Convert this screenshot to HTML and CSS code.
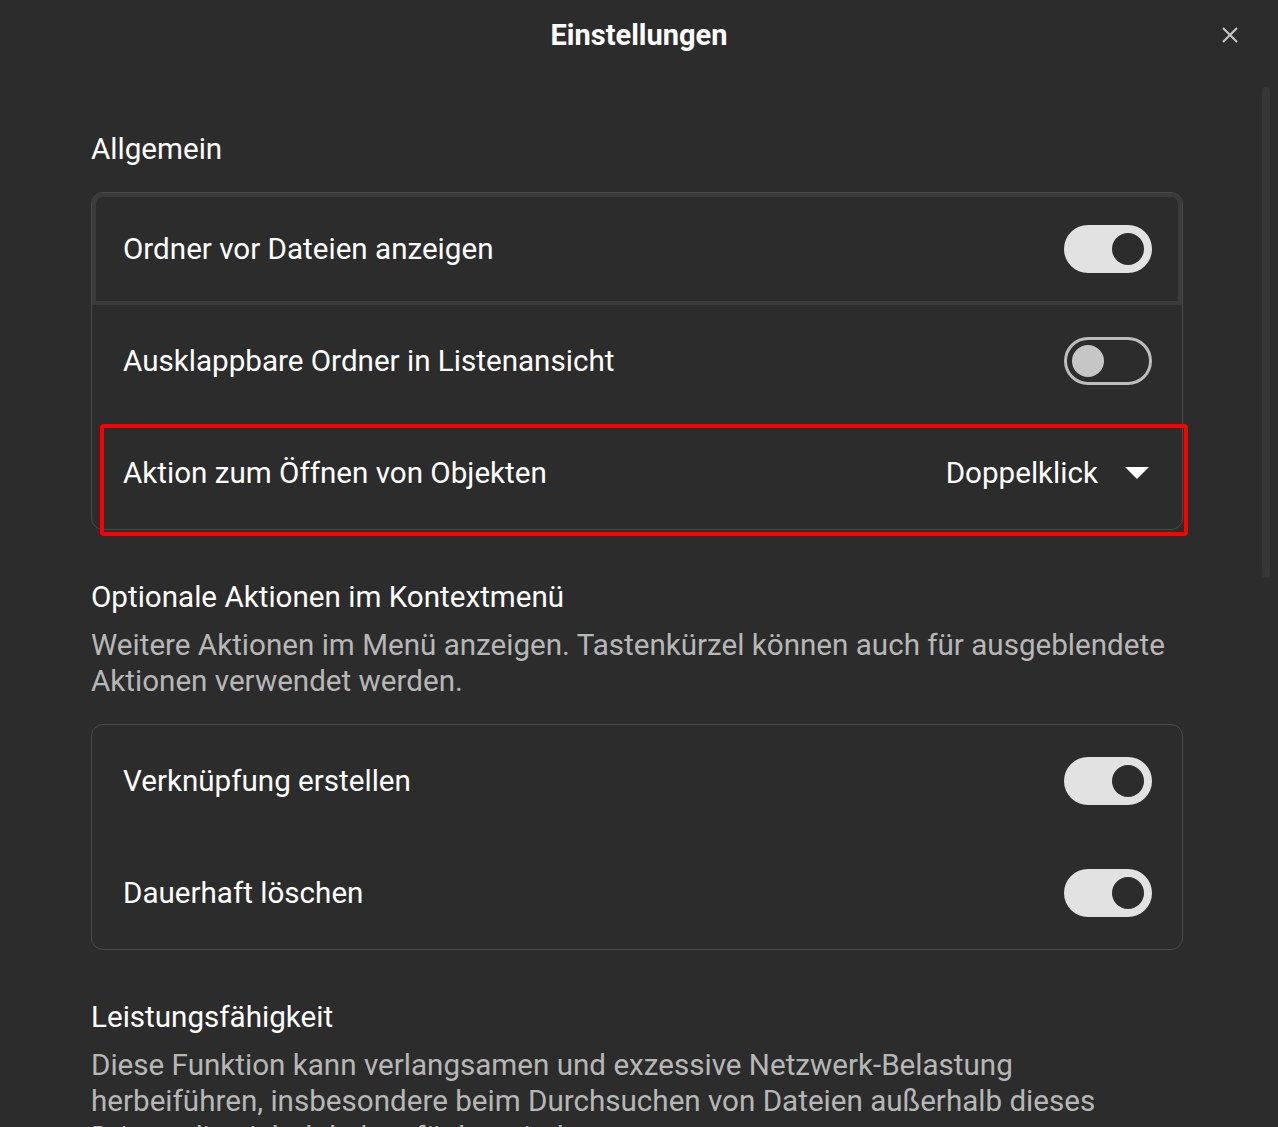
FILE: index.html
```html
<!DOCTYPE html>
<html lang="de">
<head>
    <meta charset="UTF-8">
    <meta name="viewport" content="width=device-width, initial-scale=1.0">
    <title>Einstellungen</title>
    <link rel="stylesheet" href="styles.css">
</head>
<body>
    <div class="dialog">
        <header class="dialog-header">
            <h1>Einstellungen</h1>
            <button class="close-btn" aria-label="Schließen">
                <svg width="18" height="18" viewBox="0 0 18 18">
                    <path d="M2 2 L16 16 M16 2 L2 16" stroke="#c8c8c8" stroke-width="2" fill="none"/>
                </svg>
            </button>
        </header>

        <div class="scrollbar"></div>

        <main class="content">
            <h2 class="section-title">Allgemein</h2>
            <div class="card">
                <div class="row row-focus">
                    <span class="label">Ordner vor Dateien anzeigen</span>
                    <span class="toggle on"><span class="knob"></span></span>
                </div>
                <div class="row">
                    <span class="label">Ausklappbare Ordner in Listenansicht</span>
                    <span class="toggle off"><span class="knob"></span></span>
                </div>
                <div class="row">
                    <span class="label">Aktion zum Öffnen von Objekten</span>
                    <span class="select">
                        Doppelklick
                        <svg width="24" height="12" viewBox="0 0 24 12">
                            <path d="M0 0 H24 L12 12 Z" fill="#ffffff"/>
                        </svg>
                    </span>
                    <span class="marker"></span>
                </div>
            </div>

            <h2 class="section-title spaced">Optionale Aktionen im Kontextmenü</h2>
            <p class="section-desc">Weitere Aktionen im Menü anzeigen. Tastenkürzel können auch für ausgeblendete Aktionen verwendet werden.</p>
            <div class="card">
                <div class="row">
                    <span class="label">Verknüpfung erstellen</span>
                    <span class="toggle on"><span class="knob"></span></span>
                </div>
                <div class="row">
                    <span class="label">Dauerhaft löschen</span>
                    <span class="toggle on"><span class="knob"></span></span>
                </div>
            </div>

            <h2 class="section-title spaced">Leistungsfähigkeit</h2>
            <p class="section-desc">Diese Funktion kann verlangsamen und exzessive Netzwerk-Belastung herbeiführen, insbesondere beim Durchsuchen von Dateien außerhalb dieses Drives, die nicht lokal verfügbar sind.</p>
        </main>
    </div>
</body>
</html>
```

FILE: styles.css
```css
html, body {
    margin: 0;
    height: 100%;
    overflow: hidden;
}

body {
    font-family: Roboto, "Liberation Sans", sans-serif;
    background: #2c2c2c;
    color: #ffffff;
}

.dialog {
    position: relative;
    height: 100%;
}

.dialog-header {
    height: 70px;
    display: flex;
    align-items: center;
    justify-content: center;
    position: relative;
}

.dialog-header h1 {
    margin: 0;
    font-size: 29px;
    font-weight: 700;
    line-height: 36px;
}

.close-btn {
    position: absolute;
    right: 39px;
    top: 26px;
    width: 18px;
    height: 18px;
    padding: 0;
    border: 0;
    background: none;
    cursor: pointer;
}

.close-btn svg {
    display: block;
}

.scrollbar {
    position: absolute;
    right: 8px;
    top: 87px;
    width: 8px;
    height: 491px;
    border-radius: 4px;
    background: #363636;
}

.content {
    padding: 61px 95px 0 91px;
}

.section-title {
    margin: 0;
    font-size: 29.6px;
    font-weight: 400;
    line-height: 36px;
}

.section-title.spaced {
    margin-top: 49px;
}

.section-desc {
    margin: 12px 0 0;
    font-size: 29.6px;
    line-height: 36px;
    color: #b7b7b7;
}

.card {
    margin-top: 25px;
    border: 1px solid #4a4a4a;
    border-radius: 12px;
}

.section-desc + .card {
    margin-top: 25px;
}

.row {
    position: relative;
    height: 112px;
    display: flex;
    align-items: center;
    justify-content: space-between;
    padding: 0 30px 0 31px;
    box-sizing: border-box;
}

.row-focus {
    border-radius: 11px 11px 0 0;
    box-shadow: inset 0 0 0 4px #3b3b3b;
}

.label {
    font-size: 29.6px;
    line-height: 36px;
}

.toggle {
    position: relative;
    width: 88px;
    height: 48px;
    border-radius: 24px;
    box-sizing: border-box;
}

.toggle.on {
    background: #e2e2e2;
}

.toggle.off {
    border: 3px solid #bdbdbd;
}

.knob {
    position: absolute;
    width: 32px;
    height: 32px;
    border-radius: 50%;
    top: 8px;
}

.toggle.on .knob {
    right: 8px;
    background: #2c2c2c;
}

.toggle.off .knob {
    left: 5px;
    top: 5px;
    background: #c6c6c6;
}

.select {
    display: flex;
    align-items: center;
    gap: 27px;
    font-size: 29.6px;
    line-height: 36px;
    margin-right: 3px;
}

.marker {
    position: absolute;
    left: 8px;
    right: -6px;
    top: 7px;
    bottom: -7px;
    border: 4px solid #ff0000;
    border-radius: 4px;
    pointer-events: none;
}
```
